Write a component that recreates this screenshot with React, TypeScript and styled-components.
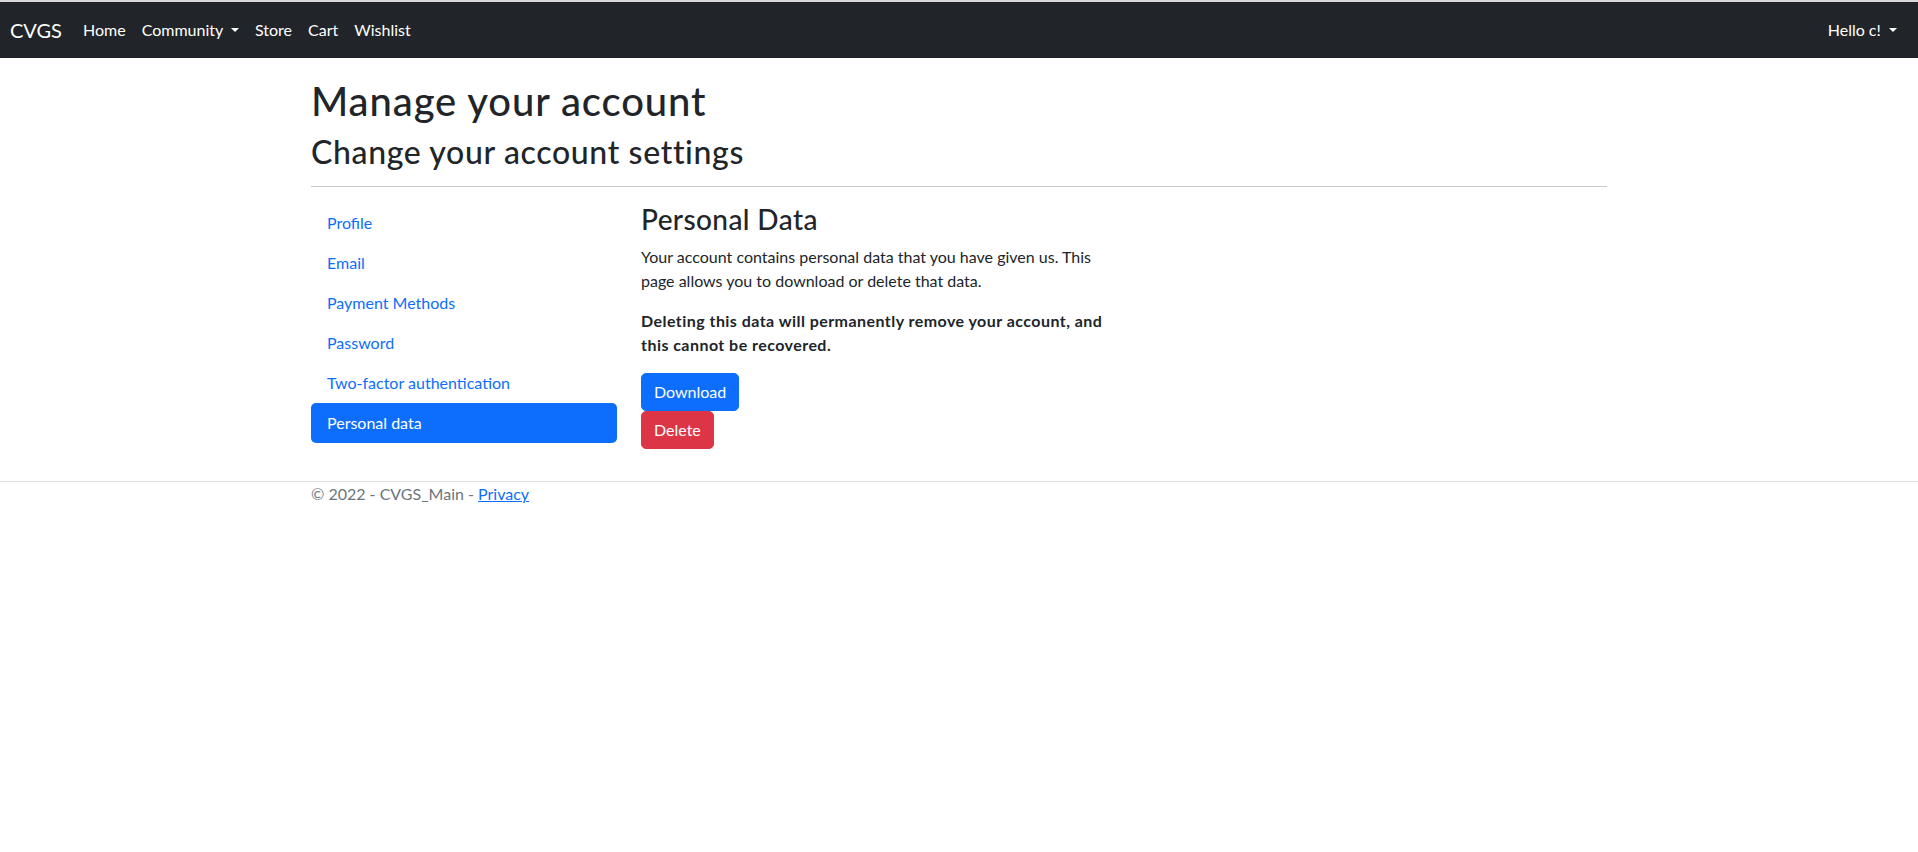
import React from "react";
import styled, { createGlobalStyle } from "styled-components";

const GlobalStyle = createGlobalStyle`
  *, *::before, *::after { box-sizing: border-box; }
  html, body { margin: 0; padding: 0; background: #fff; }
  body {
    font-family: "Segoe UI", Lato, "Liberation Sans", sans-serif;
    font-size: 16px;
    line-height: 24px;
    color: #212529;
    border-top: 2px solid #d9d9d9;
  }
`;

const Navbar = styled.nav`
  display: flex;
  align-items: center;
  justify-content: space-between;
  height: 56px;
  padding: 8px 13px 8px 10px;
  background: #212529;
  margin-bottom: 18px;
`;

const NavLeft = styled.div`
  display: flex;
  align-items: center;
`;

const Brand = styled.a`
  font-size: 20px;
  line-height: 30px;
  padding: 5px 0;
  margin-right: 13px;
  color: #fff;
  text-decoration: none;
`;

const NavList = styled.ul`
  display: flex;
  list-style: none;
  margin: 0;
  padding: 0;
`;

const NavLink = styled.a`
  display: block;
  padding: 8px;
  line-height: 24px;
  color: #fff;
  text-decoration: none;
  white-space: nowrap;
`;

const Caret = styled.span`
  display: inline-block;
  margin-left: 0.255em;
  vertical-align: 0.255em;
  border-top: 0.3em solid #fff;
  border-right: 0.3em solid transparent;
  border-left: 0.3em solid transparent;
  border-bottom: 0;
`;

const Container = styled.div`
  max-width: 1320px;
  margin: 0 auto;
  padding: 0 12px;
`;

const Main = styled.main`
  padding-bottom: 16px;
`;

const Title = styled.h1`
  font-size: 40px;
  font-weight: 500;
  line-height: 1.2;
  letter-spacing: 0.9px;
  margin: 0 0 8px;
  padding-top: 1px;
`;

const Subtitle = styled.h2`
  font-size: 32px;
  font-weight: 500;
  line-height: 1.2;
  letter-spacing: 0.65px;
  margin: 0;
`;

const Rule = styled.hr`
  border: 0;
  border-top: 1px solid #c8c9ca;
  margin: 15px 0 16px;
`;

const Row = styled.div`
  display: flex;
  margin: 0 -12px;
`;

const Col = styled.div<{ $width: string }>`
  flex: 0 0 ${(p) => p.$width};
  width: ${(p) => p.$width};
  padding: 0 12px;
`;

const SideNav = styled.ul`
  display: flex;
  flex-direction: column;
  list-style: none;
  margin: 0;
  padding: 0;
`;

const Pill = styled.a<{ $active?: boolean }>`
  display: block;
  padding: 8px 16px;
  line-height: 24px;
  border-radius: 5px;
  text-decoration: none;
  color: ${(p) => (p.$active ? "#fff" : "#0d6efd")};
  background: ${(p) => (p.$active ? "#0d6efd" : "transparent")};
`;

const SectionTitle = styled.h3`
  font-size: 28px;
  font-weight: 500;
  line-height: 1.2;
  letter-spacing: 0.4px;
  margin: 0 0 8px;
`;

const Para = styled.p`
  margin: 0 0 16px;
`;

const Strong = styled.strong`
  font-weight: 700;
  letter-spacing: 0.45px;
`;

const Button = styled.button<{ $variant: "primary" | "danger" }>`
  display: inline-block;
  font-family: inherit;
  font-size: 16px;
  line-height: 24px;
  padding: 6px 12px;
  border: 1px solid ${(p) => (p.$variant === "primary" ? "#0d6efd" : "#dc3545")};
  background: ${(p) => (p.$variant === "primary" ? "#0d6efd" : "#dc3545")};
  color: #fff;
  border-radius: 5px;
  cursor: pointer;
`;

const Form = styled.form`
  margin: 0;
`;

const Footer = styled.footer`
  border-top: 1px solid #dee2e6;
  color: #6c757d;
  white-space: nowrap;
  line-height: 24px;
`;

const FooterLink = styled.a`
  color: #0d6efd;
  text-decoration: underline;
`;

const menu = [
  "Profile",
  "Email",
  "Payment Methods",
  "Password",
  "Two-factor authentication",
  "Personal data",
];

export default function App() {
  return (
    <>
      <GlobalStyle />
      <header>
        <Navbar>
          <NavLeft>
            <Brand href="#">CVGS</Brand>
            <NavList>
              <li><NavLink href="#">Home</NavLink></li>
              <li><NavLink href="#">Community <Caret /></NavLink></li>
              <li><NavLink href="#">Store</NavLink></li>
              <li><NavLink href="#">Cart</NavLink></li>
              <li><NavLink href="#">Wishlist</NavLink></li>
            </NavList>
          </NavLeft>
          <NavList>
            <li><NavLink href="#">Hello c! <Caret /></NavLink></li>
          </NavList>
        </Navbar>
      </header>
      <Container>
        <Main>
          <Title>Manage your account</Title>
          <div>
            <Subtitle>Change your account settings</Subtitle>
            <Rule />
            <Row>
              <Col $width="25%">
                <SideNav>
                  {menu.map((m) => (
                    <li key={m}>
                      <Pill href="#" $active={m === "Personal data"}>{m}</Pill>
                    </li>
                  ))}
                </SideNav>
              </Col>
              <Col $width="75%">
                <SectionTitle>Personal Data</SectionTitle>
                <Row>
                  <Col $width="50%">
                    <Para>
                      Your account contains personal data that you have given us. This page allows you to download or delete that data.
                    </Para>
                    <Para>
                      <Strong>Deleting this data will permanently remove your account, and this cannot be recovered.</Strong>
                    </Para>
                    <Form onSubmit={(e) => e.preventDefault()}>
                      <Button type="submit" $variant="primary">Download</Button>
                    </Form>
                    <Para>
                      <Button type="button" $variant="danger">Delete</Button>
                    </Para>
                  </Col>
                </Row>
              </Col>
            </Row>
          </div>
        </Main>
      </Container>
      <Footer>
        <Container>
          &copy; 2022 - CVGS_Main - <FooterLink href="#">Privacy</FooterLink>
        </Container>
      </Footer>
    </>
  );
}
